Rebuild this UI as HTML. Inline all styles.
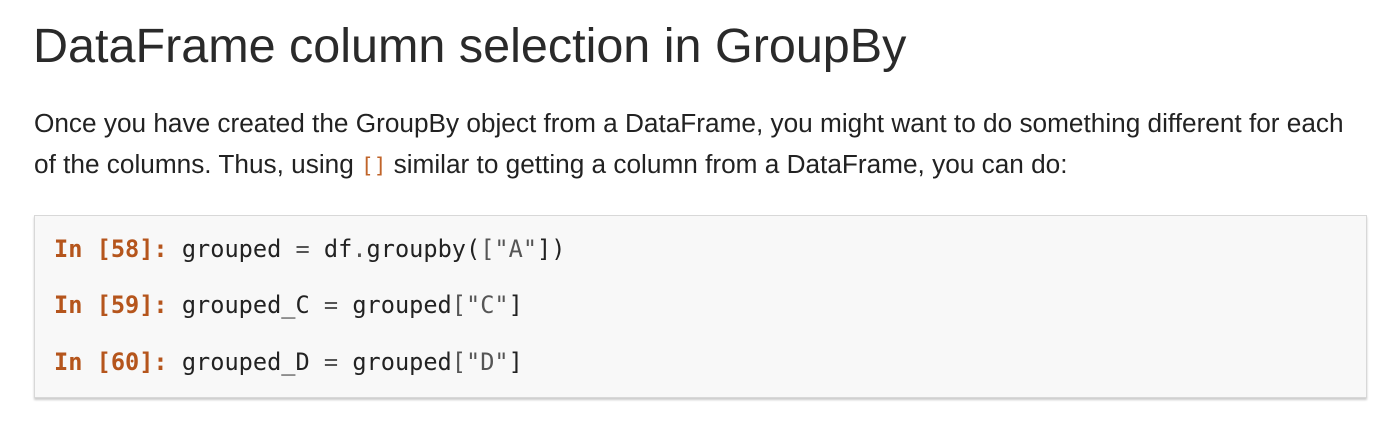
<!DOCTYPE html>
<html><head><meta charset="utf-8"><style>
html,body{margin:0;padding:0;background:#fff;width:1400px;height:423px;overflow:hidden}
body{font-family:"Liberation Sans",sans-serif;color:#222}
.t{position:absolute;left:33px;top:16px;font-size:48.5px;white-space:nowrap;color:#2a2a2a;line-height:60px}
.p{position:absolute;left:34px;white-space:nowrap;font-size:26.2px;color:#222;line-height:30px}
.c{font-family:"DejaVu Sans Mono",monospace;color:#c0642a;font-size:21px}
.box{position:absolute;left:34px;top:215px;width:1331px;height:181px;background:#f8f8f8;border:1px solid #d8d8d8;box-shadow:0 2px 2px #ccc}
.l{position:absolute;left:19px;font-family:"DejaVu Sans Mono",monospace;font-size:23.6px;white-space:pre;color:#222;line-height:30px}
.k{color:#b5551c;font-weight:bold}
.s{color:#555}
</style></head><body>
<div class="t">DataFrame column selection in GroupBy</div>
<div class="p" style="top:108px">Once you have created the GroupBy object from a DataFrame, you might want to do something different for each</div>
<div class="p" style="top:149px">of the columns. Thus, using <span class="c">[]</span> similar to getting a column from a DataFrame, you can do:</div>
<div class="box">
<div class="l" style="top:18px"><span class="k">In [58]:</span> grouped <span class="s">=</span> df<span class="s">.</span>groupby(<span class="s">[</span><span class="s">"A"</span>])</div>
<div class="l" style="top:74px"><span class="k">In [59]:</span> grouped_C <span class="s">=</span> grouped<span class="s">[</span><span class="s">"C"</span>]</div>
<div class="l" style="top:131px"><span class="k">In [60]:</span> grouped_D <span class="s">=</span> grouped<span class="s">[</span><span class="s">"D"</span>]</div>
</div>
</body></html>
